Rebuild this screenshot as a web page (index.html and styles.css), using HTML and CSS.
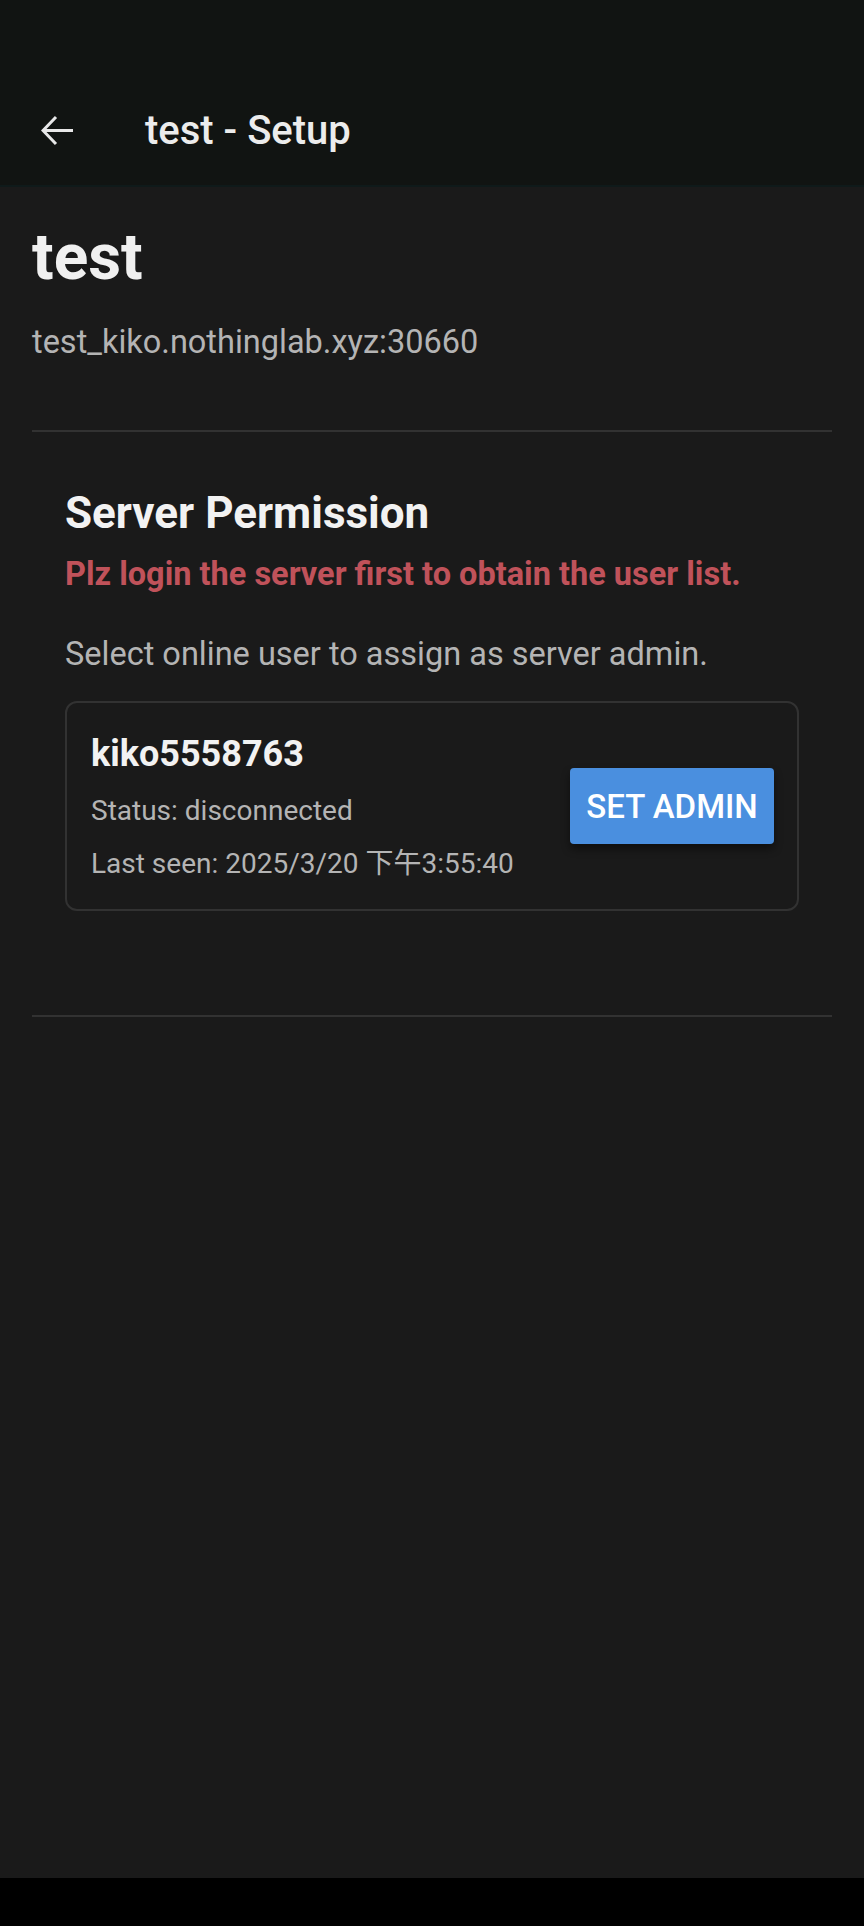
FILE: index.html
```html
<!DOCTYPE html>
<html lang="en">
<head>
    <meta charset="UTF-8">
    <meta name="viewport" content="width=device-width, initial-scale=1.0">
    <title>test - Setup</title>
    <link rel="stylesheet" href="styles.css">
</head>
<body>
    <div class="screen">
        <header class="app-bar">
            <div class="toolbar">
                <button class="back-btn" aria-label="Back">
                    <svg viewBox="0 0 32 32" fill="none" stroke="currentColor" stroke-width="3" stroke-linecap="butt" stroke-linejoin="miter">
                        <path d="M32 15.5H3"></path>
                        <path d="M15 2L2 15.5L15 29"></path>
                    </svg>
                </button>
                <h2 class="toolbar-title">test - Setup</h2>
            </div>
        </header>

        <main class="content">
            <div class="server-info">
                <h1 class="server-name">test</h1>
                <p class="server-host">test_kiko.nothinglab.xyz:30660</p>
            </div>

            <hr class="divider">

            <section class="permission">
                <h3 class="section-title">Server Permission</h3>
                <p class="warning">Plz login the server first to obtain the user list.</p>
                <p class="hint">Select online user to assign as server admin.</p>

                <div class="user-card">
                    <div class="user-info">
                        <div class="user-name">kiko5558763</div>
                        <div class="user-meta">Status: disconnected</div>
                        <div class="user-meta">Last seen: 2025/3/20 下午3:55:40</div>
                    </div>
                    <button class="admin-btn">SET ADMIN</button>
                </div>
            </section>

            <hr class="divider">
        </main>

        <div class="nav-bar"></div>
    </div>
</body>
</html>
```

FILE: styles.css
```css
:root {
    --color-bar: #111412;
    --color-bg: #1a1a1a;
    --color-text: #f2f2f2;
    --color-muted: #b4b4b4;
    --color-line: #323232;
    --color-red: #c0525a;
    --color-primary: #4a8fdf;
}

* {
    box-sizing: border-box;
}

html, body {
    margin: 0;
    padding: 0;
}

body {
    background: #000000;
    color: var(--color-text);
    font-family: Roboto, "Noto Sans CJK TC", "Noto Sans CJK SC", sans-serif;
}

.screen {
    display: flex;
    flex-direction: column;
    height: 1926px;
}

.app-bar {
    height: 187px;
    background: var(--color-bar);
    border-bottom: 2px solid #0f1a1a;
    display: flex;
    align-items: flex-end;
}

.toolbar {
    height: 108px;
    width: 100%;
    display: flex;
    align-items: center;
    padding-left: 41px;
}

.back-btn {
    width: 32px;
    height: 32px;
    padding: 0;
    border: none;
    background: none;
    color: #e8e8e8;
    cursor: pointer;
    display: flex;
}

.back-btn svg {
    width: 32px;
    height: 32px;
}

.toolbar-title {
    margin: 0 0 0 72px;
    font-size: 40px;
    font-weight: 500;
    line-height: 48px;
    color: #ececec;
}

.content {
    flex: 1;
    background: var(--color-bg);
    padding: 0 32px;
}

.server-info {
    padding-top: 33px;
    padding-bottom: 68px;
}

.server-name {
    margin: 0;
    font-size: 64px;
    font-weight: 700;
    line-height: 76px;
    color: #f0f0f0;
}

.server-host {
    margin: 26px 0 0;
    font-size: 32.5px;
    line-height: 40px;
    color: var(--color-muted);
}

.divider {
    margin: 0;
    border: none;
    height: 2px;
    background: var(--color-line);
}

.permission {
    padding: 56px 33px 104px;
}

.section-title {
    margin: 0;
    font-size: 44px;
    font-weight: 700;
    line-height: 50px;
    color: #f2f2f2;
}

.warning {
    margin: 16px 0 0;
    font-size: 32.5px;
    font-weight: 700;
    line-height: 40px;
    color: var(--color-red);
}

.hint {
    margin: 40px 0 0;
    font-size: 32.5px;
    line-height: 40px;
    color: var(--color-muted);
}

.user-card {
    margin-top: 27px;
    border: 2px solid var(--color-line);
    border-radius: 12px;
    padding: 28px 23px 28px 24px;
    display: flex;
    align-items: center;
    justify-content: space-between;
}

.user-name {
    font-size: 36px;
    font-weight: 700;
    line-height: 46px;
    color: #f2f2f2;
}

.user-meta {
    font-size: 28px;
    line-height: 34px;
    margin-top: 17px;
    color: var(--color-muted);
}

.user-meta + .user-meta {
    margin-top: 19px;
}

.admin-btn {
    width: 204px;
    height: 76px;
    border: none;
    border-radius: 4px;
    background: var(--color-primary);
    color: #ffffff;
    font-family: Roboto, sans-serif;
    font-size: 33px;
    font-weight: 500;
    box-shadow: 0 5px 8px rgba(0, 0, 0, 0.45);
    cursor: pointer;
}

.nav-bar {
    height: 48px;
    background: #000000;
}
```
